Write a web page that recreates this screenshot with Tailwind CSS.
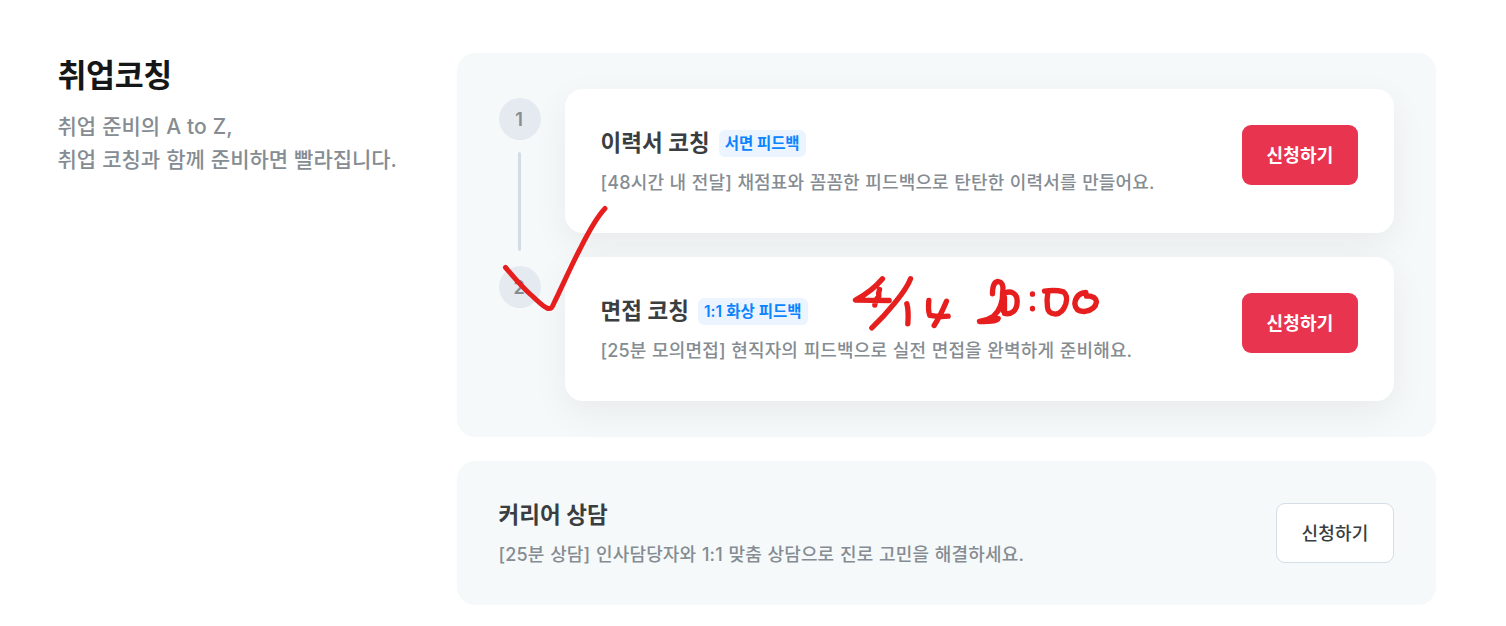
<!DOCTYPE html>
<html lang="ko">
  <head>
    <meta charset="UTF-8" />
    <title>취업코칭</title>
    <!-- Tailwind CSS CDN -->
    <script src="https://cdn.jsdelivr.net/npm/@tailwindcss/browser@4"></script>
  </head>
  <body class="relative h-[626px] overflow-hidden bg-white font-['Inter','Noto_Sans_CJK_KR',sans-serif] whitespace-nowrap">
    <main class="flex pt-[53px] pl-[57px]">
      <!-- Section title -->
      <section class="w-[400px] shrink-0 pl-[0.5px]">
        <h1 class="text-[31.5px] leading-[45px] font-bold tracking-[-0.4px] text-[#141617]">취업코칭</h1>
        <p class="mt-[11.5px] text-[21px] leading-[33px] font-medium tracking-[-0.02px] text-[#858c92] [word-spacing:0.5px]">
          취업 준비의 A to Z,<br />
          취업 코칭과 함께 준비하면 빨라집니다.
        </p>
      </section>

      <div class="w-[979px] space-y-6">
        <!-- Coaching steps -->
        <section class="flex rounded-[18px] bg-[#f5f9fa] py-9 pr-[42px] pl-[42px]">
          <div class="flex w-[66px] flex-col items-start pt-[9px]">
            <div class="flex size-[42px] items-center justify-center rounded-full bg-[#e4eaf0] pt-0.5 pr-0.5 text-lg font-semibold text-[#858c92]">1</div>
            <div class="mt-3 mb-[15px] ml-[19px] h-[99px] w-[3px] rounded-full bg-[#d5dde4]"></div>
            <div class="flex size-[42px] items-center justify-center rounded-full bg-[#e4eaf0] pt-0.5 pr-0.5 text-lg font-semibold text-[#858c92]">2</div>
          </div>

          <div class="flex-1 space-y-6">
            <article class="flex h-36 justify-between rounded-[18px] bg-white p-9 pl-[35.5px] shadow-[0_12px_36px_rgba(0,0,0,0.06)]">
              <div>
                <div class="flex h-9 items-center gap-[9px]">
                  <h2 class="text-[22.5px] font-semibold text-[#3a3e41]">이력서 코칭</h2>
                  <span class="flex h-[27px] items-center rounded-md bg-[#ebf4ff] px-1.5 pt-px text-[15.5px] font-semibold tracking-[-0.05px] text-[#0b84ff]">서면 피드백</span>
                </div>
                <p class="mt-2 text-lg leading-[27px] font-medium tracking-[0.15px] text-[#858c92] [word-spacing:0.5px]">[48시간 내 전달] 채점표와 꼼꼼한 피드백으로 탄탄한 이력서를 만들어요.</p>
              </div>
              <button class="h-[60px] w-[116px] rounded-[9px] bg-[#e9344f] pt-0.5 text-lg font-semibold tracking-[0.2px] text-white">신청하기</button>
            </article>

            <article class="flex h-36 justify-between rounded-[18px] bg-white p-9 pl-[35.5px] shadow-[0_12px_36px_rgba(0,0,0,0.06)]">
              <div>
                <div class="flex h-9 items-center gap-[9px]">
                  <h2 class="text-[22.5px] font-semibold text-[#3a3e41]">면접 코칭</h2>
                  <span class="flex h-[27px] items-center rounded-md bg-[#ebf4ff] px-1.5 pt-px text-[15.5px] font-semibold tracking-[0.05px] text-[#0b84ff]">1:1 화상 피드백</span>
                </div>
                <p class="mt-2 text-lg leading-[27px] font-medium tracking-[0.15px] text-[#858c92] [word-spacing:0.6px]">[25분 모의면접] 현직자의 피드백으로 실전 면접을 완벽하게 준비해요.</p>
              </div>
              <button class="h-[60px] w-[116px] rounded-[9px] bg-[#e9344f] pt-0.5 text-lg font-semibold tracking-[0.2px] text-white">신청하기</button>
            </article>
          </div>
        </section>

        <!-- Career consulting -->
        <section class="flex h-36 justify-between rounded-[18px] bg-[#f5f9fa] pt-9 pr-[42px] pl-[41.5px]">
          <div>
            <h2 class="text-[22.5px] leading-9 font-semibold text-[#3a3e41]">커리어 상담</h2>
            <p class="mt-2 text-lg leading-[27px] font-medium tracking-[0.15px] text-[#858c92] [word-spacing:0.7px]">[25분 상담] 인사담당자와 1:1 맞춤 상담으로 진로 고민을 해결하세요.</p>
          </div>
          <button class="mt-1.5 h-[60px] w-[118px] rounded-[9px] border border-[#d5dde6] bg-white pt-0.5 text-lg font-medium tracking-[0.2px] text-[#3a3e41]">신청하기</button>
        </section>
      </div>
    </main>

    <!-- Pen marks -->
    <svg class="pointer-events-none absolute inset-0" width="1506" height="626" fill="none" stroke="#e61e1e" stroke-width="5" stroke-linecap="round" stroke-linejoin="round">
      <path d="M505.500 267.500C512 275 521 286 530 294C537 300 543 307 548 308.500C552 309 552 307 554 303C561 289 571 266 580 249C588 233 596 218 605 208.500" />
      <g transform="translate(840.5 260.500) scale(.3333)" stroke-width="16">
        <path d="M126 55Q95 92 45 119L146 120M117 87Q113 98 115 108Q104 118 103 134" />
        <path d="M210 55Q200 82 163 127Q130 168 94 202M199 130Q205 150 202 190" />
        <path d="M265 120Q262 150 268 165Q295 170 323 167M318 122Q300 165 281 195" />
        <path d="M456 100Q456 63 474 63Q490 66 487 92C487 122 479 150 458 168Q440 180 417 183Q440 184 460 181Q471 179 473 174" />
        <path d="M486 98Q490 125 487 150M492 98C510 90 531 96 530 124C530 152 511 163 492 159L492 110" />
        <path d="M576 100V101M576 144V145M612 92Q645 87 669 94Q683 105 676 130Q667 158 645 161Q622 159 621 140Q618 118 622 97" />
        <path d="M738 107L736 96Q706 99 703 130Q705 154 733 153Q765 147 768 124Q766 106 738 106" />
      </g>
    </svg>
  </body>
</html>
